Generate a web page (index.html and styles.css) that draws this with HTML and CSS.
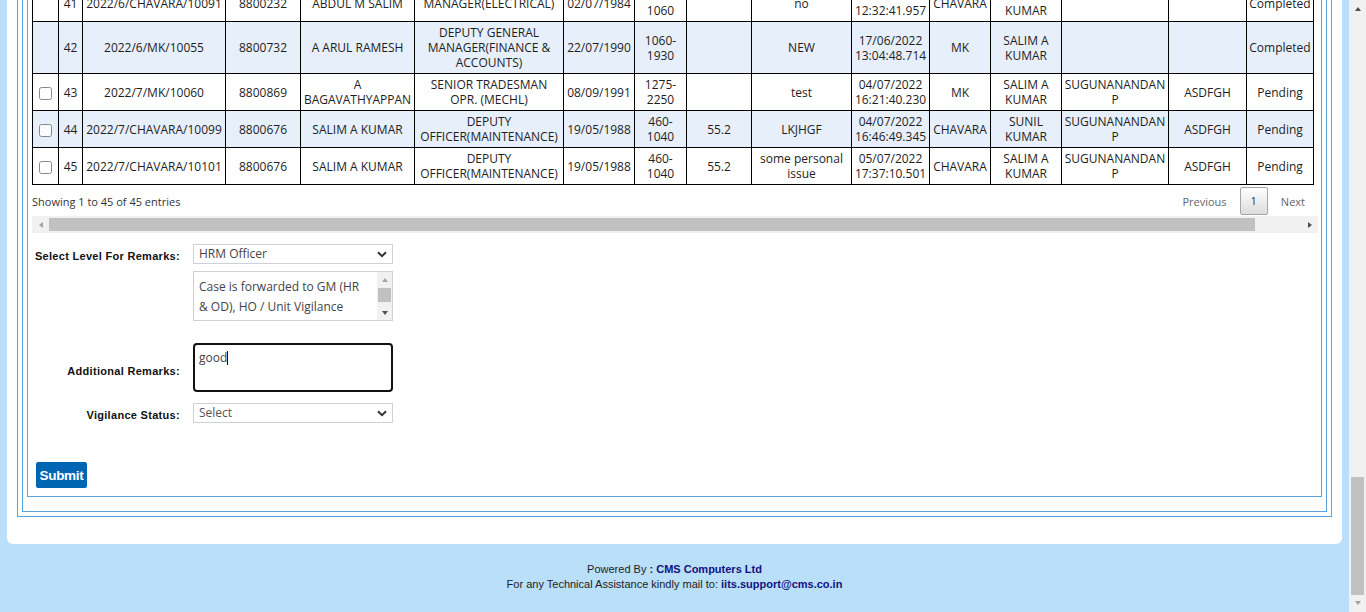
FILE: index.html
```html
<!DOCTYPE html>
<html lang="en">
<head>
<meta charset="utf-8">
<title>Vigilance Remarks</title>
<link rel="stylesheet" href="styles.css">
</head>
<body>
<div class="viewport">
  <div class="page">
    <div class="card">
      <div class="frame frame-outer">
        <div class="frame frame-mid">
          <div class="frame frame-inner">
            <div class="dt-wrapper">
              <table class="data">
                <colgroup>
                  <col class="w26"><col class="w24"><col class="w143"><col class="w75"><col class="w114"><col class="w149"><col class="w71"><col class="w52"><col class="w65"><col class="w100"><col class="w78"><col class="w61"><col class="w71"><col class="w107"><col class="w78"><col class="w67">
                </colgroup>
                <tbody>
                  <tr>
                    <td></td><td>41</td><td>2022/6/CHAVARA/10091</td><td>8800232</td><td>ABDUL M SALIM</td><td>MANAGER(ELECTRICAL)</td><td>02/07/1984</td><td>460-1060</td><td></td><td>no</td><td>13/06/2022 12:32:41.957</td><td>CHAVARA</td><td>SALIM A KUMAR</td><td></td><td></td><td>Completed</td>
                  </tr>
                  <tr class="alt">
                    <td></td><td>42</td><td>2022/6/MK/10055</td><td>8800732</td><td>A ARUL RAMESH</td><td>DEPUTY GENERAL MANAGER(FINANCE &amp; ACCOUNTS)</td><td>22/07/1990</td><td>1060-1930</td><td></td><td>NEW</td><td>17/06/2022 13:04:48.714</td><td>MK</td><td>SALIM A KUMAR</td><td></td><td></td><td>Completed</td>
                  </tr>
                  <tr>
                    <td><input type="checkbox" class="cb"></td><td>43</td><td>2022/7/MK/10060</td><td>8800869</td><td>A BAGAVATHYAPPAN</td><td>SENIOR TRADESMAN OPR. (MECHL)</td><td>08/09/1991</td><td>1275-2250</td><td></td><td>test</td><td>04/07/2022 16:21:40.230</td><td>MK</td><td>SALIM A KUMAR</td><td>SUGUNANANDAN P</td><td>ASDFGH</td><td>Pending</td>
                  </tr>
                  <tr class="alt">
                    <td><input type="checkbox" class="cb"></td><td>44</td><td>2022/7/CHAVARA/10099</td><td>8800676</td><td>SALIM A KUMAR</td><td>DEPUTY OFFICER(MAINTENANCE)</td><td>19/05/1988</td><td>460-1040</td><td>55.2</td><td>LKJHGF</td><td>04/07/2022 16:46:49.345</td><td>CHAVARA</td><td>SUNIL KUMAR</td><td>SUGUNANANDAN P</td><td>ASDFGH</td><td>Pending</td>
                  </tr>
                  <tr>
                    <td><input type="checkbox" class="cb"></td><td>45</td><td>2022/7/CHAVARA/10101</td><td>8800676</td><td>SALIM A KUMAR</td><td>DEPUTY OFFICER(MAINTENANCE)</td><td>19/05/1988</td><td>460-1040</td><td>55.2</td><td>some personal issue</td><td>05/07/2022 17:37:10.501</td><td>CHAVARA</td><td>SALIM A KUMAR</td><td>SUGUNANANDAN P</td><td>ASDFGH</td><td>Pending</td>
                  </tr>
                </tbody>
              </table>
              <div class="dt-bottom">
                <div class="dt-info">Showing 1 to 45 of 45 entries</div>
                <div class="dt-paging">
                  <span class="pg pg-disabled">Previous</span>
                  <span class="pg pg-current">1</span>
                  <span class="pg pg-disabled">Next</span>
                </div>
              </div>
              <div class="hscroll">
                <span class="arrow-left"></span>
                <div class="hscroll-track"><div class="hscroll-thumb"></div></div>
                <span class="arrow-right"></span>
              </div>
            </div>

            <form class="remarks">
              <label class="lbl lbl-first">Select Level For Remarks:</label>
              <div class="field-group">
                <div class="select-wrap">
                  <select class="sel"><option>HRM Officer</option></select>
                  <svg class="chev" width="10" height="7" viewBox="0 0 10 7"><path d="M1 1.2 L5 5.2 L9 1.2" fill="none" stroke="#333" stroke-width="2"/></svg>
                </div>
                <div class="note-box">
                  <div class="note-text">Case is forwarded to GM (HR &amp; OD), HO / Unit Vigilance</div>
                  <div class="vbar">
                    <span class="arrow-up arrow-dim"></span>
                    <div class="vbar-track"><div class="vbar-thumb"></div></div>
                    <span class="arrow-down"></span>
                  </div>
                </div>
              </div>

              <label class="lbl lbl-second">Additional Remarks:</label>
              <div class="remark-input">good<span class="caret"></span></div>

              <label class="lbl lbl-third">Vigilance Status:</label>
              <div class="select-wrap select-last">
                <select class="sel sel-muted"><option>Select</option></select>
                <svg class="chev" width="10" height="7" viewBox="0 0 10 7"><path d="M1 1.2 L5 5.2 L9 1.2" fill="none" stroke="#333" stroke-width="2"/></svg>
              </div>

              <button type="button" class="submit">Submit</button>
            </form>
          </div>
        </div>
      </div>
    </div>
    <footer class="footer">
      <div>Powered By <b class="dark">:</b> <b class="navy">CMS Computers Ltd</b></div>
      <div>For any Technical Assistance kindly mail to: <b class="navy">iits.support@cms.co.in</b></div>
    </footer>
  </div>
  <div class="vscroll">
    <div class="vscroll-btn"><span class="arrow-up"></span></div>
    <div class="vscroll-track"><div class="vscroll-thumb"></div></div>
    <div class="vscroll-btn"><span class="arrow-down arrow-dim"></span></div>
  </div>
</div>
</body>
</html>
```

FILE: styles.css
```css
* { box-sizing: border-box; }

html, body {
  margin: 0;
  padding: 0;
  height: 612px;
  overflow: hidden;
}

body {
  font-family: "Open Sans", "Liberation Sans", sans-serif;
  color: #222;
  background: #b9dff9;
}

.viewport {
  display: flex;
  height: 612px;
  overflow: hidden;
}

.page {
  flex: 1;
  display: flex;
  flex-direction: column;
  background: #b9dff9;
}

.card {
  margin: -41px 7px 0;
  padding: 10px 10px 27px;
  background: #fff;
  border-radius: 0 0 6px 6px;
}

.frame { border: 1px solid #5aa4da; }
.frame-outer { padding: 4px; }
.frame-mid { padding: 4px 4px 14px; }
.frame-inner { padding: 4px 3px 8px 4px; }

/* ---------- table ---------- */
.data {
  border-collapse: collapse;
  table-layout: fixed;
  width: 1282px;
  font-size: 12px;
  line-height: 15px;
  color: #1e1e1e;
}
.data td {
  border: 1px solid #000;
  padding: 3px 2px;
  text-align: center;
  vertical-align: middle;
}
.data tr.alt td { background: #e7effa; }

.w26 { width: 26px; } .w24 { width: 24px; } .w143 { width: 143px; } .w75 { width: 75px; }
.w114 { width: 114px; } .w149 { width: 149px; } .w71 { width: 71px; } .w52 { width: 52px; }
.w65 { width: 65px; } .w100 { width: 100px; } .w78 { width: 78px; } .w61 { width: 61px; }
.w107 { width: 107px; } .w67 { width: 67px; }

.cb {
  width: 13px;
  height: 13px;
  margin: 0;
  vertical-align: middle;
  accent-color: #fff;
  opacity: 0.85;
}

.dt-bottom {
  display: flex;
  align-items: center;
  justify-content: space-between;
  margin-top: 2px;
  height: 28px;
  font-size: 11px;
}
.dt-info { color: #333; padding-top: 1px; }
.dt-paging { display: flex; align-items: center; padding-right: 1px; }
.pg {
  display: inline-block;
  margin-left: 1px;
  padding: 7px 11px 5px;
  line-height: 14px;
  border: 1px solid transparent;
  border-radius: 2px;
  color: #666;
  font-size: 11px;
}
.pg-current {
  color: #333;
  border-color: #a6a6a6;
  background: linear-gradient(#fff, #dcdcdc);
  padding: 6px 10px;
}

/* fake horizontal scrollbar */
.hscroll {
  display: flex;
  align-items: center;
  height: 17px;
  margin-top: 1px;
  background: #f1f1f1;
}
.hscroll-track {
  flex: 1;
  height: 17px;
  display: flex;
  align-items: center;
}
.hscroll-thumb {
  width: 1206px;
  height: 13px;
  background: #c1c1c1;
}
.arrow-left, .arrow-right {
  width: 17px;
  display: flex;
  justify-content: center;
}
.arrow-left::before {
  content: "";
  border-top: 3.5px solid transparent;
  border-bottom: 3.5px solid transparent;
  border-right: 4px solid #a3a3a3;
}
.arrow-right::before {
  content: "";
  border-top: 3.5px solid transparent;
  border-bottom: 3.5px solid transparent;
  border-left: 4px solid #505050;
}

/* ---------- form ---------- */
.remarks {
  display: grid;
  grid-template-columns: 148px 200px;
  column-gap: 13px;
  margin-top: 11px;
  font-family: "Liberation Sans", Arial, sans-serif;
}
.lbl {
  text-align: right;
  font-weight: bold;
  font-size: 11px;
  letter-spacing: 0.3px;
  line-height: 20px;
  color: #111;
}
.lbl-first { align-self: start; padding-top: 2px; }
.lbl-second { align-self: center; padding-top: 8px; margin-top: 21px; }
.lbl-third { align-self: start; line-height: 15px; padding-top: 5px; margin-top: 11px; }

.field-group { display: flex; flex-direction: column; gap: 7px; }

.select-wrap { position: relative; height: 20px; }
.select-last { margin-top: 11px; }
.sel {
  appearance: none;
  -webkit-appearance: none;
  width: 200px;
  height: 20px;
  margin: 0;
  padding: 0 20px 0 5px;
  border: 1px solid #cdd1d8;
  border-radius: 0;
  background: #fff;
  font-family: "Open Sans", sans-serif;
  font-size: 12px;
  line-height: 18px;
  color: #444;
}
.sel-muted { color: #555; }
.chev {
  position: absolute;
  right: 6px;
  top: 7px;
}

.note-box {
  display: flex;
  width: 200px;
  height: 50px;
  border: 1px solid #cdd1d8;
  background: #fff;
}
.note-text {
  flex: 1;
  padding: 5px 12px 0 5px;
  font-family: "Open Sans", sans-serif;
  font-size: 12px;
  line-height: 20px;
  color: #444;
  overflow: hidden;
}
.vbar {
  width: 15px;
  display: flex;
  flex-direction: column;
  align-items: center;
  background: #f1f1f1;
}
.vbar .arrow-up, .vbar .arrow-down { height: 15px; }
.vbar-track { flex: 1; width: 100%; padding: 1px 1px 0; }
.vbar-thumb { height: 14px; background: #c1c1c1; }

.arrow-up, .arrow-down {
  display: flex;
  align-items: center;
  justify-content: center;
  width: 100%;
}
.arrow-up::before {
  content: "";
  border-left: 3.5px solid transparent;
  border-right: 3.5px solid transparent;
  border-bottom: 4px solid #505050;
}
.arrow-down::before {
  content: "";
  border-left: 3.5px solid transparent;
  border-right: 3.5px solid transparent;
  border-top: 4px solid #505050;
}
.arrow-dim.arrow-up::before { border-bottom-color: #a3a3a3; }
.arrow-dim.arrow-down::before { border-top-color: #a3a3a3; }

.remark-input {
  margin-top: 22px;
  width: 200px;
  height: 49px;
  border: 2px solid #111;
  border-radius: 4px;
  padding: 5px 4px;
  font-family: "Open Sans", sans-serif;
  font-size: 12px;
  line-height: 15px;
  color: #444;
}
.caret {
  display: inline-block;
  width: 1px;
  height: 14px;
  background: #111;
  vertical-align: -3px;
}

.submit {
  grid-column: 1 / 3;
  justify-self: start;
  margin: 39px 0 0 4px;
  width: 51px;
  height: 26px;
  padding: 0;
  border: none;
  border-radius: 2px;
  background: #0066b3;
  color: #fff;
  font-family: "Liberation Sans", Arial, sans-serif;
  font-weight: bold;
  font-size: 13.5px;
  letter-spacing: -0.3px;
}

/* ---------- footer ---------- */
.footer {
  padding-top: 18px;
  text-align: center;
  font-family: "Liberation Sans", Arial, sans-serif;
  font-size: 11px;
  line-height: 15px;
  color: #222;
}
.navy { color: #12127e; }
.dark { color: #222; }

/* ---------- fake page scrollbar ---------- */
.vscroll {
  width: 17px;
  height: 612px;
  display: flex;
  flex-direction: column;
  background: #f1f1f1;
}
.vscroll-btn { height: 17px; display: flex; }
.vscroll-btn .arrow-up { align-items: flex-start; padding-top: 7px; }
.vscroll-btn .arrow-down { align-items: flex-start; padding-top: 6px; }
.vscroll-track {
  flex: 1;
  display: flex;
  flex-direction: column;
  justify-content: flex-end;
  padding: 0 2px;
}
.vscroll-thumb { height: 118px; background: #c1c1c1; }
```
